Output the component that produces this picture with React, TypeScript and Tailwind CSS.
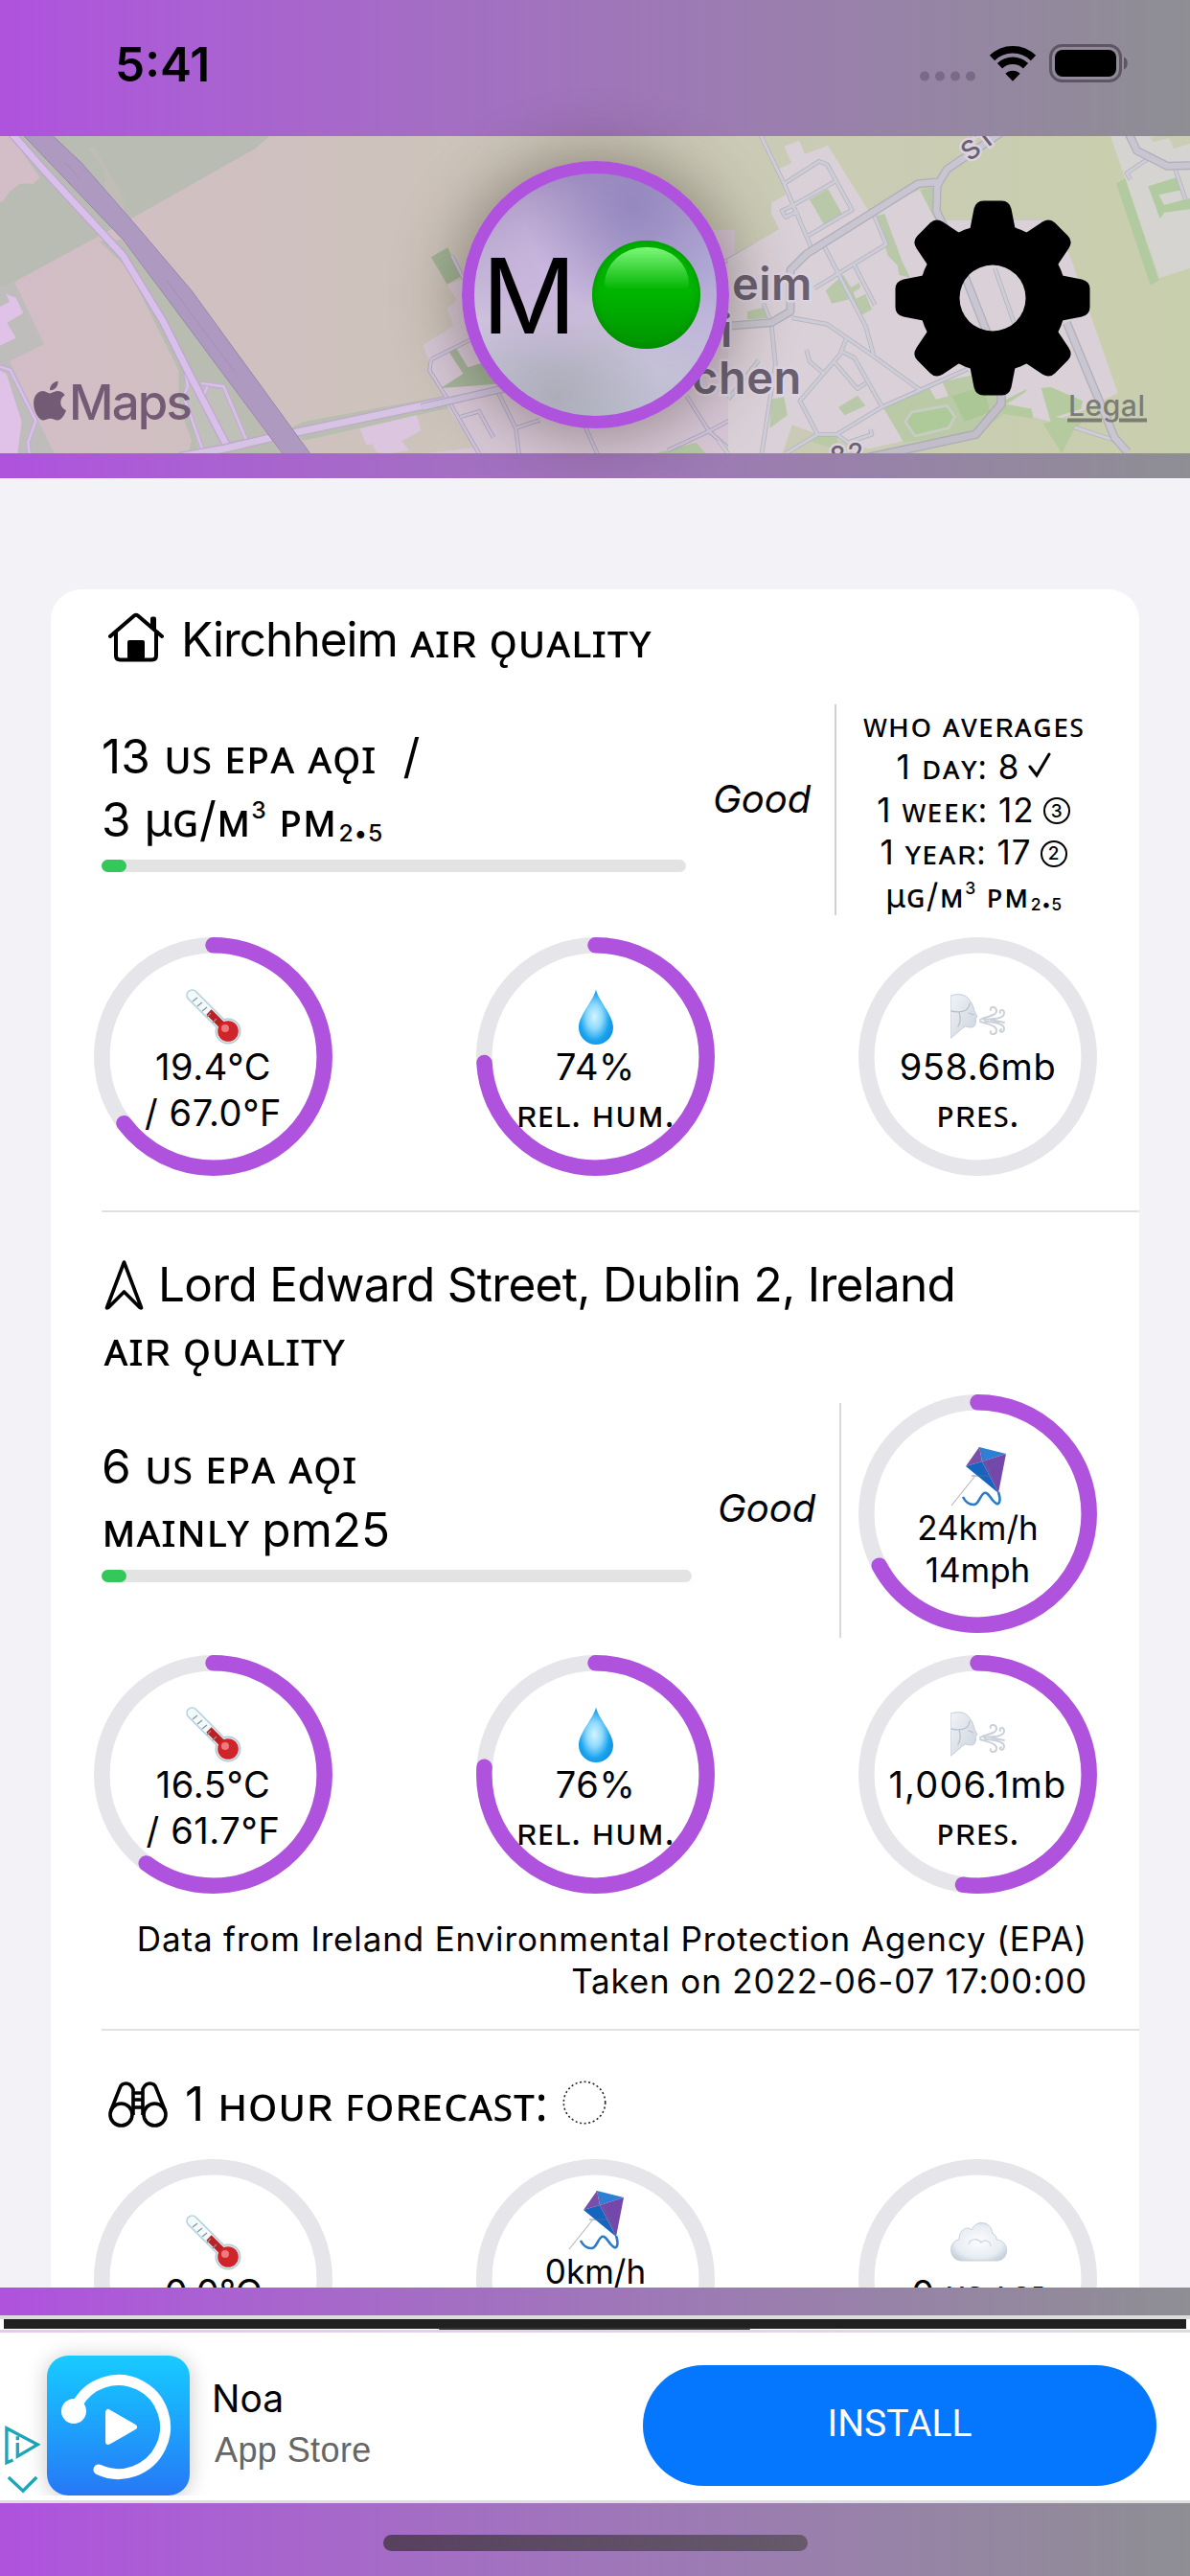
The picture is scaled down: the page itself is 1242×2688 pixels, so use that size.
import React from "react";

const BAR = "bg-gradient-to-r from-[#af52de] to-[#8e8e93]";

function Thermometer() {
  return (
    <svg viewBox="0 0 58 58" className="h-[58px] w-[58px]">
      <line x1="6.500" y1="6.500" x2="43" y2="43" stroke="#b5d3df" strokeWidth="12.500" strokeLinecap="round" />
      <circle cx="44" cy="44" r="13.500" fill="#b5cbd4" />
      <line x1="6.500" y1="6.500" x2="43" y2="43" stroke="#f3fafc" strokeWidth="9.500" strokeLinecap="round" />
      <circle cx="44" cy="44" r="12" fill="#dfe9ee" />
      <line x1="24" y1="24" x2="42" y2="42" stroke="#b92225" strokeWidth="7.500" />
      <circle cx="44" cy="44" r="10.800" fill="#cf2429" />
      <circle cx="41" cy="41" r="4" fill="#f0797b" />
      <path d="M7 13l5-4M12 18l5-4M17 23l5-4M22 29l4-4M28 35l4-4" stroke="#8b959b" strokeWidth="1.300" />
    </svg>
  );
}

function Drop() {
  return (
    <svg viewBox="0 0 36 58" className="h-[58px] w-[36px]">
      <defs>
        <radialGradient id="drop" cx=".46" cy=".5" r=".55">
          <stop offset="0" stopColor="#d4f4ff" />
          <stop offset=".4" stopColor="#8fdafc" />
          <stop offset=".78" stopColor="#1ba4f0" />
          <stop offset="1" stopColor="#1295e4" />
        </radialGradient>
      </defs>
      <path d="M18 0C19 10 36 27 36 40a18 18 0 0 1-36 0C0 27 17 10 18 0z" fill="url(#drop)" />
    </svg>
  );
}

function WindFace() {
  return (
    <svg viewBox="0 0 58 58" className="h-[58px] w-[58px]" fill="none" strokeLinecap="round">
      <defs>
        <linearGradient id="face" x1="0" y1="0" x2="1" y2="1">
          <stop offset="0" stopColor="#f1f3f7" />
          <stop offset="1" stopColor="#cbd3dd" />
        </linearGradient>
      </defs>
      <path
        d="M.5 7C9 4 17 6 20 12c3 3 4 7 5 11l3 6-2 2 .5 3-1 4c-2 3-6 2-10 1-4 2-8 7-15 12z"
        fill="url(#face)"
        stroke="#c5cdd8"
        strokeWidth="1"
      />
      <path d="M1 23c9 2 18 1 19-8M9 24c2 6 2 10-1 15M19 25l5 2" stroke="#b7c1cd" strokeWidth="1.300" />
      <g stroke="#c9d0d9" strokeWidth="1.900">
        <path d="M31 32c8-4 18-4 17-10-1-5-8-3-6 0" />
        <path d="M35 32c8-1 21 0 21-7 0-5-6-3-4 0" />
        <path d="M31 34c8 3 18 4 17 10-1 5-8 3-6 0" />
        <path d="M36 34c8 0 21 2 20 8-1 5-7 2-3 0M42 32l14 3" />
      </g>
    </svg>
  );
}

function Kite() {
  return (
    <svg viewBox="0 0 58 62" className="h-[62px] w-[58px]" fill="none">
      <path d="M25 31L1 61" stroke="#b8b8bc" strokeWidth="1.200" />
      <path d="M30 0L16 20L33 15z" fill="#7b4fa8" />
      <path d="M30 0L58 7L33 15z" fill="#2f7fd6" />
      <path d="M16 20L33 15L50 48z" fill="#1565bf" />
      <path d="M58 7L33 15L50 48z" fill="#7447ab" />
      <path d="M22 30h18M30 0L50 48" stroke="#5a6d98" strokeWidth=".8" />
      <path d="M50 47c3 9 1 13-2 12-6-3-8-13-13-11-5 3-5 12-11 12-5 0-9-4-11-8" stroke="#2b7cc6" strokeWidth="2.600" />
    </svg>
  );
}

function Cloud() {
  return (
    <svg viewBox="0 0 60 58" className="h-[58px] w-[60px]">
      <defs>
        <radialGradient id="cloud" cx=".5" cy=".5" r=".6">
          <stop offset="0" stopColor="#fdfdfe" />
          <stop offset=".7" stopColor="#e7edf2" />
          <stop offset="1" stopColor="#c3ced8" />
        </radialGradient>
      </defs>
      <path
        d="M12 48C-1 47-2 28 10 26 10 16 18 11 23 16 28 4 44 7 45 20 48 21 49 23 49 26 63 27 63 47 50 48z"
        fill="url(#cloud)"
        stroke="#c7d1da"
        strokeWidth="1"
      />
      <path d="M20 31c1-6 10-7 13-2 4-4 10-1 10 4" fill="none" stroke="#d3dbe2" strokeWidth="1.500" />
    </svg>
  );
}

function Ring({ value = 0, children, className }: { value?: number; children: React.ReactNode; className: string }) {
  const c = 2 * Math.PI * 116.2;
  return (
    <div className="relative h-[249px] w-[249px] shrink-0">
      <svg viewBox="0 0 249 249" className="absolute inset-0 -rotate-90" fill="none" strokeWidth="16.500">
        <circle cx="124.500" cy="124.500" r="116.200" stroke="#e5e5ea" />
        {value > 0 && (
          <circle
            cx="124.500"
            cy="124.500"
            r="116.200"
            stroke="#af52de"
            strokeLinecap="round"
            strokeDasharray={`${c * value} ${c}`}
          />
        )}
      </svg>
      <div className={`relative flex flex-col items-center whitespace-pre ${className}`}>{children}</div>
    </div>
  );
}

const BIG = "pt-[54px] text-[38px] leading-[47.5px] tracking-[0.6px]";

function Sc({ children }: { children: React.ReactNode }) {
  return <span className="font-['Noto_Sans','Inter',sans-serif]">{children}</span>;
}

function Units() {
  return (
    <>
      <span>µ</span>
      <Sc>ɢ</Sc>/<Sc>ᴍ</Sc>
      <span className="relative -top-[0.39em] ml-[0.02em] text-[0.5em] font-medium leading-none [top:-0.78em]">3</span>
      <Sc> ᴘᴍ</Sc>
      <span className="relative ml-[0.08em] text-[0.5em] font-medium leading-none tracking-[0.04em] [top:0.2em]">2•5</span>
    </>
  );
}

function MapView() {
  return (
    <svg viewBox="0 142 1242 331" className="block h-[331px] w-full" fill="none">
      <defs>
        <linearGradient id="field" gradientUnits="userSpaceOnUse" x1="0" y1="0" x2="1242" y2="0">
          <stop offset="0" stopColor="#d3bdc7" />
          <stop offset=".35" stopColor="#cdc3bb" />
          <stop offset=".65" stopColor="#cacbb5" />
          <stop offset="1" stopColor="#c8cfad" />
        </linearGradient>
      </defs>
      <rect y="142" width="1242" height="331" fill="url(#field)" />

      <g transform="translate(0 140) scale(.33333)">
        <path d="M0 0H850L800 45L410 265L45 462L0 480z" fill="#b9bcb3" />
        <path d="M0 0H30L125 135L105 155H62L30 180L8 212H0z" fill="#d3bdc7" />
        <path d="M275 45L295 38L390 205V265L330 200L325 110z" fill="#c0bdb6" />
        <path d="M0 480L45 462L138 658L30 710L170 1000H0z" fill="#bfbcbc" />
        <path d="M0 540L30 525L18 500L50 512L73 560L22 590L50 638L0 662z" fill="#e0c2e8" />
        <path d="M0 740L20 750L68 900L55 1000H0z" fill="#e0c2e8" />
        <path d="M310 335L400 420L560 740V850L600 960L590 1000H880L500 480L380 330z" fill="#b8bcb1" />
        <path d="M575 780L700 800L770 950L620 990z" fill="#bfc0b8" />
        <path d="M910 920L950 900L1440 810V850L950 960z" fill="#b9bfb0" />
        <path d="M1127 922L1304 880L1318 928L1258 960L1280 990L1215 1000L1180 997L1165 970L1147 973z" fill="#dcc5de" />
        <g stroke="#c3a9d3" strokeWidth="13">
          <path d="M0 728L32 738L112 897L88 965L92 1005" />
          <path d="M575 710L588 790L575 820L635 990M630 780L700 790L770 955M650 790L632 830" />
        </g>
        <g stroke="#d8c0ea" strokeWidth="8">
          <path d="M0 728L32 738L112 897L88 965L92 1005" />
          <path d="M575 710L588 790L575 820L635 990M630 780L700 790L770 955M650 790L632 830" />
        </g>
        <path d="M30 -10L140 115L385 380L510 585L590 745L715 985" stroke="#bfa6d0" strokeWidth="27" />
        <path d="M30 -10L140 115L385 380L510 585L590 745L715 985" stroke="#d8c0ea" strokeWidth="20" />
        <path d="M560 1010L700 985L850 950L1440 825" stroke="#bfaacb" strokeWidth="29" />
        <path d="M560 1010L700 985L850 950L1440 825" stroke="#d7c3e4" strokeWidth="21" />
        <path d="M70 0H160L255 90L430 290L600 490L975 1005H888L500 483L385 330z" fill="#ae99c0" stroke="#9a86ac" strokeWidth="3" />
        <path d="M205 90L250 140M520 455L735 745" stroke="#9d8ab2" strokeWidth="2" />
      </g>

      <g transform="translate(450 140) scale(.33333)">
        <path d="M-25 660L70 600L50 545L80 520L50 470L150 440L400 300L950 300V1000H-25L140 980L60 870L0 735z" fill="#d7c7d6" />
        <path d="M0 385L52 355L93 445L50 470z" fill="#a2b596" />
        <path d="M55 680L78 670L115 730L180 710L240 780L30 795L100 750z" fill="#a5b59b" />
        <path d="M700 1000L830 965L860 1000z" fill="#b5c8a5" />
        <g stroke="#afa6be" strokeWidth="13">
          <path d="M65 380L100 450M0 705L130 640M0 705L-5 740L55 835L150 1000M90 885L150 868L195 950M210 810L265 920L275 1000M265 920L340 895M480 910L520 1000M740 990L870 930L1020 850M800 820L870 930L950 1000M900 410L1020 345" />
        </g>
        <g stroke="#cfc4da" strokeWidth="8">
          <path d="M65 380L100 450M0 705L130 640M0 705L-5 740L55 835L150 1000M90 885L150 868L195 950M210 810L265 920L275 1000M265 920L340 895M480 910L520 1000M740 990L870 930L1020 850M800 820L870 930L950 1000M900 410L1020 345" />
        </g>
        <path d="M-30 855L210 800L400 770" stroke="#b2a8c2" strokeWidth="25" />
        <path d="M-30 855L210 800L400 770" stroke="#cfc2dc" strokeWidth="18" />
      </g>

      <g transform="translate(760 140) scale(.33333)">
        <path
          d="M0 390L160 297L135 250V215L180 190L160 108L198 90L175 38L222 20L240 62L312 35L440 240L600 175L680 270L1010 270L1070 380L1220 810L1100 870L1010 900L860 860L700 850L550 960L440 985L280 940L200 1000H0z"
          fill="#dad0d7"
        />
        <path d="M1195 0H1446V420L1350 450z" fill="#d6d4d1" />
        <path d="M1215 155L1243 138L1348 458L1322 472zM1315 163L1405 135L1420 175L1348 190L1365 222L1446 200V235L1365 245L1352 265z" fill="#b2caa0" />
        <path d="M1320 10L1370 0L1446 -10V30L1395 45L1380 12L1330 25z" fill="#c9ceb5" />
        <path
          d="M255 205L312 170L357 250L300 282zM60 555L120 540L132 575L60 580zM305 490L360 440L385 480L410 465L415 480L392 495L400 515L430 500L450 548L415 568L385 515L325 530zM345 855L405 818L430 850L365 880zM135 830L175 822L185 880L130 920zM465 255L490 250L545 400L570 450L535 440L530 410L500 380zM600 175L640 165L650 240L690 285L660 290z"
          fill="#b9c8a9"
        />
        <path d="M485 855L630 795L650 830L690 820L670 775L830 740L850 800L860 880L770 940L550 965zM255 960L290 935L340 940L350 1000L300 975z" fill="#bacaa7" />
        <path d="M555 900L575 870L685 850L710 885L690 920L585 945z" fill="#adca98" stroke="#c9ccc6" strokeWidth="8" />
        <path d="M700 820L800 790L820 870L740 900z" fill="#aac795" />
        <path d="M850 840L935 798L930 808L870 845L950 860L955 890L860 875zM980 795L1010 792L1110 835L1105 860L1025 885L1110 900L1080 930L1045 1000L985 905L1010 900z" fill="#b6ca9f" />
        <path d="M170 1000L200 910L280 940L210 1000z" fill="#cbcab7" />
        <g stroke="#b7b3c2" strokeWidth="14" strokeLinejoin="round">
          <path d="M100 0L175 155L260 355M175 155L285 85L310 95L388 237L250 318M335 148L205 222L168 240L180 260L220 240M455 250L495 345L270 482M300 350L430 600L455 690M395 410L460 535M110 530L135 590L148 720L105 1000M200 575L310 595L455 695L600 800M370 640L350 690L225 835L280 940M245 675L255 712L300 750M355 680L395 700L480 850M330 710L405 797L430 780M0 1000L-30 960M180 1000L280 940L340 940L480 855L750 735M340 940L375 965L450 940L445 925M1400 110L1432 205M1310 80L1248 122L1260 142M835 420L895 590M1085 918L1215 960M0 830L95 708" />
        </g>
        <g stroke="#cdcdd6" strokeWidth="9" strokeLinejoin="round">
          <path d="M100 0L175 155L260 355M175 155L285 85L310 95L388 237L250 318M335 148L205 222L168 240L180 260L220 240M455 250L495 345L270 482M300 350L430 600L455 690M395 410L460 535M110 530L135 590L148 720L105 1000M200 575L310 595L455 695L600 800M370 640L350 690L225 835L280 940M245 675L255 712L300 750M355 680L395 700L480 850M330 710L405 797L430 780M0 1000L-30 960M180 1000L280 940L340 940L480 855L750 735M340 940L375 965L450 940L445 925M1400 110L1432 205M1310 80L1248 122L1260 142M835 420L895 590M1085 918L1215 960M0 830L95 708" />
        </g>
        <g strokeLinejoin="round">
          <path d="M-20 602L135 590L195 555V425L245 375L595 155L655 150M855 -5L685 110L655 160L652 240L700 340L810 620M1255 0L1280 52L1375 100L1446 98M1060 590L1210 950L1250 995" stroke="#b1afbb" strokeWidth="27" />
          <path d="M-20 602L135 590L195 555V425L245 375L595 155L655 150M855 -5L685 110L655 160L652 240L700 340L810 620M1255 0L1280 52L1375 100L1446 98M1060 590L1210 950L1250 995" stroke="#c9c6d1" strokeWidth="19" />
          <path d="M440 1012L775 940L855 845V780" stroke="#aeabb9" strokeWidth="29" />
          <path d="M440 1012L775 940L855 845V780" stroke="#c1bec9" strokeWidth="21" />
        </g>
      </g>

      <g className="font-['Inter',sans-serif]" fill="#696070" stroke="#ddd3e0" strokeWidth="5" paintOrder="stroke" fontWeight="600">
        <text x="764" y="313" fontSize="47" letterSpacing=".5">eim</text>
        <text x="752" y="362" fontSize="47">i</text>
        <text x="722" y="411" fontSize="47" letterSpacing=".5">chen</text>
        <text x="1012" y="169" fontSize="27" fontWeight="500" letterSpacing="2" transform="rotate(-38 1012 169)">ST</text>
        <text x="868" y="486" fontSize="27" fontWeight="500" letterSpacing="2" transform="rotate(-9 868 486)">82</text>
      </g>

      <g fill="#735b75">
        <path d="M60.500 397.800c.5 5.500-3.900 9.900-8.400 9.400c-.4-4.800 3.800-9 8.400-9.400z" />
        <path d="M51.800 410.500c2.400 0 4.600-2.400 8.300-2.400c3 0 6 1.500 7.600 4.200c-6.600 4-5.500 13.200 1.300 15.900c-2 5.500-5.300 10.300-8.900 10.300c-2.900 0-4-1.800-7.600-1.800s-4.800 1.800-7.400 1.800c-4.500 0-10-9.400-10-17.600c0-8.300 5-12.800 9.900-12.800c2.800 0 5 2.400 6.800 2.400z" />
        <text x="72" y="438" fontSize="51" fontWeight="500" className="font-['Inter',sans-serif]" textLength="129">Maps</text>
      </g>
      <g className="font-['Inter',sans-serif]" fill="#7b7d74">
        <text x="1115" y="434" fontSize="30" fontWeight="500" textLength="80">Legal</text>
        <path d="M1114 436.500h36v4h-36zM1168 436.500h29v4h-29z" />
      </g>
    </svg>
  );
}

function Gear() {
  return (
    <svg viewBox="-102 -102 204 204" className="h-[204px] w-[204px]">
      <defs>
        <mask id="hub">
          <rect x="-102" y="-102" width="204" height="204" fill="#fff" />
          <circle r="34.500" fill="#000" />
        </mask>
      </defs>
      <g mask="url(#hub)">
        <circle r="77" />
        {[0, 45, 90, 135, 180, 225, 270, 315].map((a) => (
          <path
            key={a}
            transform={`rotate(${a})`}
            d="M-24 -70L-19.500 -93Q-17.500 -101.500 -9.500 -101.500H9.500Q17.500 -101.500 19.500 -93L24 -70z"
          />
        ))}
      </g>
    </svg>
  );
}

function Header() {
  return (
    <div className="relative overflow-hidden">
      <div className={`${BAR} h-[142px]`}>
        <div className="flex items-start justify-between pl-[120px] pr-[64px]">
          <div className="mt-[36px] text-[49.500px] font-semibold leading-[62px]">5:41</div>
          <div className="mt-[46px] flex">
            <svg viewBox="0 0 58 40" className="mr-[14px] h-[40px] w-[58px]" fill="#7c6889">
              <circle cx="5" cy="33.500" r="5" />
              <circle cx="21" cy="33.500" r="5" />
              <circle cx="37" cy="33.500" r="5" />
              <circle cx="53" cy="33.500" r="5" />
            </svg>
            <svg viewBox="0 0 50 40" className="mr-[13px] h-[40px] w-[50px]" fill="none" stroke="#000" strokeWidth="7.500">
              <path d="M3.500 14.500a30.500 30.500 0 0 1 43 0" />
              <path d="M11.500 22.800a19.300 19.300 0 0 1 27 0" />
              <path d="M17.300 30.800a11 11 0 0 1 15.400 0L25 38.800z" fill="#000" stroke="none" />
            </svg>
            <svg viewBox="0 0 83 40" className="h-[40px] w-[83px]">
              <rect x="1.500" y="1.500" width="73" height="37" rx="12" fill="none" stroke="#5d5464" strokeWidth="3" />
              <rect x="6" y="6" width="64" height="28" rx="8" />
              <path d="M78 13.500c5 2 5 11 0 13z" fill="#5d5464" />
            </svg>
          </div>
        </div>
      </div>
      <MapView />
      <div className={`${BAR} h-[26px]`} />
      <div className="absolute left-[482px] top-[168px] flex h-[279px] w-[279px] items-center rounded-full border-[13px] border-[#af52de] bg-[radial-gradient(circle_at_66%_14%,rgba(146,134,190,0.9)_0%,transparent_42%),radial-gradient(circle_at_95%_38%,#b2abd7_0%,transparent_42%),radial-gradient(circle_at_32%_40%,#cab6de_0%,transparent_45%),radial-gradient(circle_at_34%_92%,#adadba_0%,transparent_38%),linear-gradient(#a48fc0,#cdc2dc_60%,#bcbfd0)] shadow-[0_0_66px_6px_rgba(45,35,25,0.4)]">
        <span className="ml-[8px] w-[100px] text-[109px] leading-[120px]">M</span>
        <span className="ml-[15px] h-[113px] w-[113px] shrink-0 rounded-full bg-[linear-gradient(#00b400,#00b400_50%,#009300)] shadow-[inset_0_0_6px_2px_rgba(0,130,0,0.5)]">
          <span className="mx-auto mt-[7px] block h-[50px] w-[88px] rounded-[44px_44px_40px_40px/40px_40px_12px_12px] bg-[linear-gradient(#8aff87,#00b400_90%)] opacity-90" />
        </span>
      </div>
      <div className="absolute left-[933.500px] top-[209px]">
        <Gear />
      </div>
    </div>
  );
}

function Meter({ className }: { className: string }) {
  return (
    <div className={`mt-[10px] h-[13px] rounded-full bg-[#e3e3e3] ${className}`}>
      <div className="h-full w-[26px] rounded-full bg-[#34c759]" />
    </div>
  );
}

function Home() {
  return (
    <svg viewBox="0 0 58 52" className="mt-[5px] h-[52px] w-[58px]" fill="none" stroke="#000" strokeWidth="4" strokeLinecap="round" strokeLinejoin="round">
      <path d="M2 25L27 3.500Q29 2 31 3.500L56 25" />
      <path d="M8 21V45Q8 49.500 12.500 49.500H45.500Q50 49.500 50 45V21M48 17V6.500H46V15" />
      <path d="M22 47V31H36V47z" fill="#000" />
    </svg>
  );
}

function Binoculars() {
  return (
    <svg viewBox="0 0 62 48" className="h-[48px] w-[62px]" fill="none" stroke="#000" strokeWidth="3.600">
      <circle cx="13.500" cy="34.500" r="11.500" />
      <circle cx="48.500" cy="34.500" r="11.500" />
      <path d="M2.500 31L12 7Q13.500 2 18.500 2T26 8V35M59.500 31L50 7Q48.500 2 43.500 2T36 8V35M26 12H36M26 19H36M26 27H36" />
    </svg>
  );
}

function Count({ n }: { n: number }) {
  return (
    <span className="relative -top-[5px] ml-[9px] mr-[1px] inline-flex h-[28px] w-[28px] items-center justify-center rounded-full border-[2.500px] border-black text-[19px] font-medium leading-none tracking-normal">
      {n}
    </span>
  );
}

function Card() {
  return (
    <div className="mx-[53px] h-[2000px] rounded-[32px] bg-white pt-[19px]">
      <div className="flex h-[66px] whitespace-pre pl-[60px] text-[49.500px] leading-[66px]">
        <Home />
        <span className="ml-[18px] tracking-[-1px]">Kirchheim </span>
        <span><Sc>ᴀɪʀ ǫᴜᴀʟɪᴛʏ</Sc></span>
      </div>
      <div className="mt-[35px] flex h-[220px] pl-[53px]">
        <div className="w-[610px] whitespace-pre pt-[20px] text-[49.500px] leading-[66px]">
          <div className="h-[66px]">13 <Sc>ᴜꜱ ᴇᴘᴀ ᴀǫɪ</Sc>  /</div>
          <div className="h-[66px]">3 <Units /></div>
          <Meter className="w-[610px]" />
        </div>
        <div className="ml-[28px] w-[127px] pt-[77px] text-[40px] italic leading-[44px]">Good</div>
        <div className="w-[2px] bg-[#d1d1d4]" />
        <div className="-mt-px w-[287px] whitespace-pre text-center text-[35px] leading-[44.400px] tracking-[1px]">
          <div className="h-[44.400px]"><Sc>ᴡʜᴏ ᴀᴠᴇʀᴀɢᴇꜱ</Sc></div>
          <div className="h-[44.400px]">
            1 <Sc>ᴅᴀʏ:</Sc> 8
            <svg viewBox="0 0 24 28" className="relative -top-[1px] ml-[9px] inline-block h-[28px] w-[24px] align-baseline" fill="none" stroke="#000" strokeWidth="3" strokeLinecap="round">
              <path d="M2 16L9 25L22 3" />
            </svg>
          </div>
          <div className="h-[44.400px]">1 <Sc>ᴡᴇᴇᴋ:</Sc> 12<Count n={3} /></div>
          <div className="h-[44.400px]">1 <Sc>ʏᴇᴀʀ:</Sc> 17<Count n={2} /></div>
          <div className="h-[44.400px]"><Units /></div>
        </div>
      </div>
      <div className="mt-[23px] flex justify-between pl-[45px] pr-[44px]">
        <Ring value={0.647} className={BIG}><Thermometer /><span>19.4°C</span><span>/ 67.0°F</span></Ring>
        <Ring value={0.74} className={BIG}><Drop /><span>74%</span><span><Sc>ʀᴇʟ. ʜᴜᴍ.</Sc></span></Ring>
        <Ring className={BIG}><WindFace /><span>958.6mb</span><span><Sc>ᴘʀᴇꜱ.</Sc></span></Ring>
      </div>

      <div className="ml-[53px] mt-[36px] h-[2px] bg-[#e1e1e3]" />

      <div className="mt-[42px] whitespace-pre pl-[55px] text-[49.500px] leading-[66px]">
        <div className="flex">
          <svg viewBox="0 0 43 54" className="mt-[7px] h-[54px] w-[43px]" fill="none" stroke="#000" strokeWidth="3.600" strokeLinejoin="round">
            <path d="M21.500 3L39.500 50.500Q40 51.500 38 50.500L21.500 34L5 50.500Q3 51.500 3.500 50.500z" />
          </svg>
          <span className="ml-[14px] tracking-[-0.700px]">Lord Edward Street, Dublin 2, Ireland</span>
        </div>
        <div className="h-[66px]"><Sc>ᴀɪʀ ǫᴜᴀʟɪᴛʏ</Sc></div>
      </div>
      <div className="mt-[16px] flex h-[250px] pl-[53px]">
        <div className="w-[616px] whitespace-pre pt-[41px] text-[49.500px] leading-[66px]">
          <div className="h-[66px]">6 <Sc>ᴜꜱ ᴇᴘᴀ ᴀǫɪ</Sc></div>
          <div className="h-[66px]"><Sc>ᴍᴀɪɴʟʏ </Sc>pm25</div>
          <Meter className="w-[616px]" />
        </div>
        <div className="ml-[27px] w-[127px] pt-[97px] text-[40px] italic leading-[44px]">Good</div>
        <div className="mt-[9px] h-[245px] w-[2px] bg-[#d9d9dc]" />
        <div className="ml-[18px]">
          <Ring value={0.672} className="pt-[55px] text-[35px] leading-[44.400px]"><Kite /><span>24km/h</span><span>14mph</span></Ring>
        </div>
      </div>
      <div className="mt-[22px] flex justify-between pl-[45px] pr-[44px]">
        <Ring value={0.602} className={BIG}><Thermometer /><span>16.5°C</span><span>/ 61.7°F</span></Ring>
        <Ring value={0.76} className={BIG}><Drop /><span>76%</span><span><Sc>ʀᴇʟ. ʜᴜᴍ.</Sc></span></Ring>
        <Ring value={0.521} className={BIG}><WindFace /><span className="tracking-[1.200px]">1,006.1mb</span><span><Sc>ᴘʀᴇꜱ.</Sc></span></Ring>
      </div>
      <div className="mt-[25px] pr-[54px] text-right text-[35px] leading-[44.400px] tracking-[0.850px]">
        <div>Data from Ireland Environmental Protection Agency (EPA)</div>
        <div>Taken on 2022-06-07 17:00:00</div>
      </div>

      <div className="ml-[53px] mt-[27px] h-[2px] bg-[#e1e1e3]" />

      <div className="mt-[42px] flex whitespace-pre pl-[60px] text-[49.500px] leading-[66px]">
        <div className="pt-[11px]"><Binoculars /></div>
        <span className="ml-[18px]">1 <Sc>ʜᴏᴜʀ ꜰᴏʀᴇᴄᴀꜱᴛ:</Sc></span>
        <svg viewBox="0 0 46 46" className="ml-[15px] mt-[10px] h-[46px] w-[46px]" fill="none" stroke="#222" strokeWidth="1.600" strokeDasharray="2 2.600">
          <circle cx="23" cy="23" r="21.700" />
        </svg>
      </div>
      <div className="mt-[25px] flex justify-between pl-[45px] pr-[44px]">
        <Ring className="pt-[58px] text-[38px] leading-[47.500px]"><Thermometer /><span>0.0°C</span></Ring>
        <Ring className="pt-[33px] text-[35px] leading-[44.400px]"><Kite /><span>0km/h</span></Ring>
        <Ring className="pt-[58px] text-[38px] leading-[47.500px]"><Cloud /><span>0 <Sc>ᴜꜱ ᴀǫɪ</Sc></span></Ring>
      </div>
    </div>
  );
}

function Ad() {
  return (
    <div className="h-[196px] border-b-[3px] border-[#dedede] bg-white">
      <div className="h-[4px] bg-[#dcdcdc]" />
      <div className="mx-[4px] h-[10px] bg-[#212121]">
        <div className="relative left-[454px] top-[9px] h-[2px] w-[325px] rounded-full bg-[#333]" />
      </div>
      <div className="mt-[1px] h-[3px] bg-gradient-to-r from-[#e9c6f8] to-[#dcdce0]" />
      <div className="flex h-[170px] overflow-hidden">
        <div className="flex w-[49px] flex-col pl-[4px] pt-[96px]">
          <svg viewBox="0 0 40 78" className="h-[78px] w-[40px]" fill="none" stroke="#1fa5bb" strokeWidth="3.500">
            <path d="M9 39L2 42V4L36 22L14 35V20M14 13V17" />
            <path d="M4 58L20 73L35 58" />
          </svg>
        </div>
        <div className="mt-[24px] h-[146px] w-[149px] shrink-0 rounded-[22px] bg-gradient-to-b from-[#19cbff] to-[#2777f6] shadow-[0_2px_22px_rgba(0,0,0,0.22)]">
          <svg viewBox="0 0 149 146" className="h-[146px] w-[149px]" fill="none" stroke="#fff" strokeWidth="11" strokeLinecap="round">
            <path d="M31 52A49 49 0 1 1 54 119" />
            <circle cx="28" cy="58" r="13" fill="#fff" stroke="none" />
            <path d="M64 59V90L91 74.500z" fill="#fff" strokeWidth="6" strokeLinejoin="round" />
          </svg>
        </div>
        <div className="ml-[23px] w-[450px] pt-[43px] font-['Liberation_Sans',sans-serif]">
          <div className="text-[39px] leading-[52px] font-['Inter',sans-serif]">Noa</div>
          <div className="ml-[3px] mt-[1px] text-[36px] leading-[54px] tracking-[0.400px] text-[#666]">App Store</div>
        </div>
        <div className="mt-[34px] flex h-[126px] w-[536px] items-center justify-center rounded-full bg-[#0477fe] pb-[3px] font-['Roboto',sans-serif] text-[39px] text-white">
          INSTALL
        </div>
      </div>
    </div>
  );
}

export default function App() {
  return (
    <div className="h-[2688px] w-[1242px] overflow-hidden bg-[#f2f2f7] font-['Inter','Noto_Sans',sans-serif] text-black">
      <Header />
      <div className="h-[1888px] overflow-hidden pt-[116px]">
        <Card />
      </div>
      <div className={`${BAR} h-[29px]`} />
      <Ad />
      <div className={`${BAR} h-[76px] pt-[33px]`}>
        <div className="ml-[400px] h-[17px] w-[443px] rounded-full bg-gradient-to-r from-[#58405f] to-[#665a6b]" />
      </div>
    </div>
  );
}
